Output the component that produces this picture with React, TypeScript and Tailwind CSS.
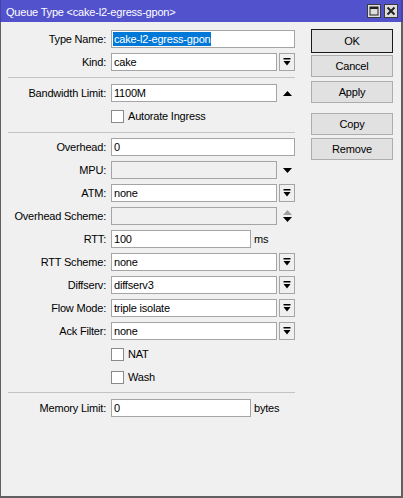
import React from 'react'

const FONT = "font-['Liberation_Sans',Arial,sans-serif] text-[11px] tracking-[-0.2px]"

function DropIcon() {
  return (
    <svg width="8" height="8" viewBox="0 0 8 8">
      <rect x="0.5" y="0" width="7" height="1.5" fill="#000" />
      <polygon points="0.5,3 7.5,3 4,7.5" fill="#000" />
    </svg>
  )
}

function UpTri({ color = '#000' }: { color?: string }) {
  return (
    <svg width="9" height="5" viewBox="0 0 9 5">
      <polygon points="0,5 9,5 4.5,0" fill={color} />
    </svg>
  )
}

function DownTri({ color = '#000' }: { color?: string }) {
  return (
    <svg width="9" height="5" viewBox="0 0 9 5">
      <polygon points="0,0 9,0 4.5,5" fill={color} />
    </svg>
  )
}

function Label({ text }: { text: string }) {
  return <div className="w-[98px] shrink-0 text-right text-black whitespace-nowrap">{text}</div>
}

function Input({ value, width, disabled, selected }: { value?: string; width: string; disabled?: boolean; selected?: boolean }) {
  return (
    <div
      className={`${width} h-[18px] ml-[5px] border border-[#a5a5a5] ${disabled ? 'bg-[#f0f0f0]' : 'bg-white'} flex items-center pl-[1px] overflow-hidden whitespace-nowrap`}
    >
      {selected ? (
        <span className="bg-[#0078d7] text-white leading-[14px] px-[1px]">{value}</span>
      ) : (
        <span className="text-black px-[1px]">{value}</span>
      )}
    </div>
  )
}

function DropBtn() {
  return (
    <div className="w-[16px] h-[18px] ml-[2px] border border-[#a5a5a5] bg-[#f0f0f0] flex items-center justify-center">
      <DropIcon />
    </div>
  )
}

function Row({ children, className = '' }: { children: React.ReactNode; className?: string }) {
  return <div className={`h-[18px] flex items-center ${className}`}>{children}</div>
}

function SelectRow({ label, value }: { label: string; value: string }) {
  return (
    <Row className="mt-[5px]">
      <Label text={label + ':'} />
      <Input value={value} width="w-[166px]" />
      <DropBtn />
    </Row>
  )
}

function Check({ label, className = '' }: { label: string; className?: string }) {
  return (
    <Row className={className}>
      <div className="w-[98px] shrink-0" />
      <div className="ml-[5px] w-[13px] h-[13px] border border-[#8a8a8a] bg-white" />
      <span className="ml-[4px] text-black">{label}</span>
    </Row>
  )
}

function Sep({ className = '' }: { className?: string }) {
  return <div className={`h-px w-[287px] bg-[#c4c4c4] ${className}`} />
}

function Btn({ label, primary, className = '' }: { label: string; primary?: boolean; className?: string }) {
  return (
    <div
      className={`w-[82px] ${primary ? 'h-[24px] border-[#1a1a1a]' : 'h-[22px] border-[#adadad]'} border bg-[#e1e1e1] flex items-center justify-center text-black ${className}`}
    >
      {label}
    </div>
  )
}

export default function App() {
  return (
    <div className={`w-[403px] h-[498px] flex flex-col ${FONT}`}>
      {/* title bar */}
      <div className="h-[22px] shrink-0 bg-[#5252cd] border-l border-r-2 border-[#4242a8] flex items-center pl-[5px] pr-[3px] pt-[2px]">
        <span className="text-white flex-1 whitespace-nowrap">Queue Type &lt;cake-l2-egress-gpon&gt;</span>
        <div className="flex gap-[3px] -mt-[2px]">
          <div className="w-[14px] h-[14px] border border-[#3a3a3a] bg-[#dedede] flex items-center justify-center">
            <svg width="10" height="10" viewBox="0 0 10 10">
              <rect x="1" y="1" width="8" height="8" fill="none" stroke="#222" strokeWidth="1" />
              <rect x="1" y="1" width="8" height="2" fill="#222" />
            </svg>
          </div>
          <div className="w-[14px] h-[14px] border border-[#3a3a3a] bg-[#dedede] flex items-center justify-center">
            <svg width="10" height="10" viewBox="0 0 10 10">
              <path d="M1.5 1.5 L8.5 8.5 M8.5 1.5 L1.5 8.5" stroke="#222" strokeWidth="2" />
            </svg>
          </div>
        </div>
      </div>

      {/* body */}
      <div className="flex-1 flex bg-[#f0f0f0] border-l border-r-2 border-b-2 border-[#606060]">
        <div className="w-[294px] pl-[7px] pt-[8px] flex flex-col">
          <Row>
            <Label text="Type Name:" />
            <Input value="cake-l2-egress-gpon" width="w-[184px]" selected />
          </Row>
          <SelectRow label="Kind" value="cake" />

          <Sep className="mt-[6px]" />

          <Row className="mt-[6px]">
            <Label text="Bandwidth Limit:" />
            <Input value="1100M" width="w-[166px]" />
            <div className="ml-[6px] flex"><UpTri /></div>
          </Row>
          <Check label="Autorate Ingress" className="mt-[5px]" />

          <Sep className="mt-[7px]" />

          <Row className="mt-[5px]">
            <Label text="Overhead:" />
            <Input value="0" width="w-[184px]" />
          </Row>
          <Row className="mt-[5px]">
            <Label text="MPU:" />
            <Input width="w-[166px]" disabled />
            <div className="ml-[6px] flex"><DownTri /></div>
          </Row>
          <SelectRow label="ATM" value="none" />
          <Row className="mt-[5px]">
            <Label text="Overhead Scheme:" />
            <Input width="w-[166px]" disabled />
            <div className="ml-[6px] flex flex-col gap-[2px]">
              <UpTri color="#a0a0a0" />
              <DownTri />
            </div>
          </Row>
          <Row className="mt-[5px]">
            <Label text="RTT:" />
            <Input value="100" width="w-[140px]" />
            <span className="ml-[3px] text-black">ms</span>
          </Row>
          <SelectRow label="RTT Scheme" value="none" />
          <SelectRow label="Diffserv" value="diffserv3" />
          <SelectRow label="Flow Mode" value="triple isolate" />
          <SelectRow label="Ack Filter" value="none" />
          <Check label="NAT" className="mt-[5px]" />
          <Check label="Wash" className="mt-[5px]" />

          <Sep className="mt-[6px]" />

          <Row className="mt-[6px]">
            <Label text="Memory Limit:" />
            <Input value="0" width="w-[140px]" />
            <span className="ml-[3px] text-black">bytes</span>
          </Row>
        </div>

        <div className="ml-[16px] pt-[7px] flex flex-col">
          <Btn label="OK" primary />
          <Btn label="Cancel" className="mt-[2px]" />
          <Btn label="Apply" className="mt-[4px]" />
          <Btn label="Copy" className="mt-[10px]" />
          <Btn label="Remove" className="mt-[3px]" />
        </div>
      </div>
    </div>
  )
}
